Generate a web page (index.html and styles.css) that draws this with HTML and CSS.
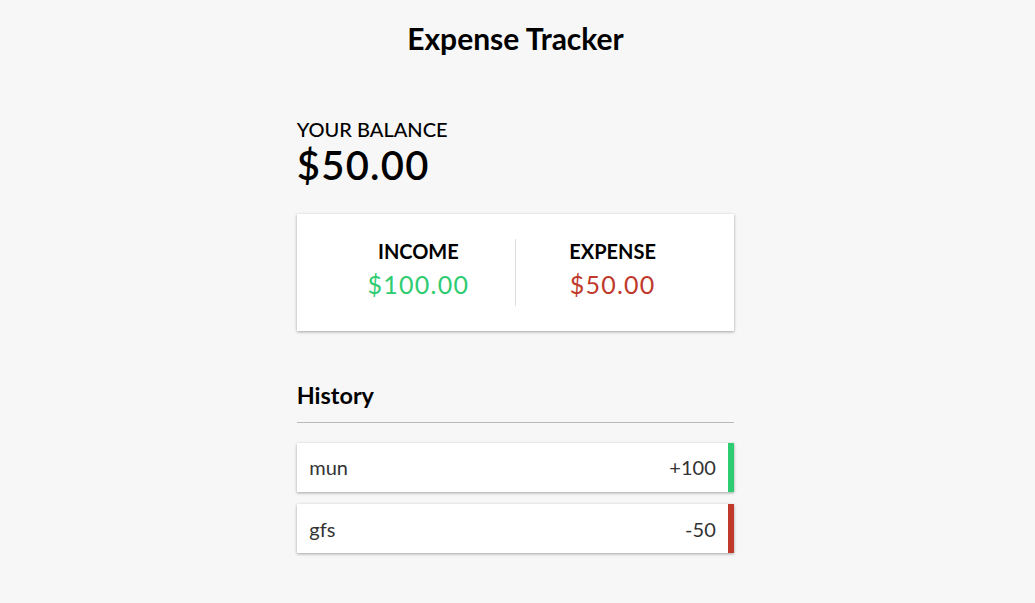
FILE: index.html
```html
<!DOCTYPE html>
<html lang="en">
<head>
<meta charset="UTF-8">
<title>Expense Tracker</title>
<link rel="stylesheet" href="styles.css">
</head>
<body>
  <h2 class="title">Expense Tracker</h2>
  <div class="container">
    <h4 class="balance-label">Your Balance</h4>
    <h1 class="balance">$50.00</h1>
    <div class="inc-exp">
      <div class="inc-exp-col first">
        <h4 class="col-label">Income</h4>
        <p class="money plus">$100.00</p>
      </div>
      <div class="inc-exp-col">
        <h4 class="col-label">Expense</h4>
        <p class="money minus">$50.00</p>
      </div>
    </div>
    <h3 class="section">History</h3>
    <ul class="list">
      <li class="item plus"><span>mun</span><span>+100</span></li>
      <li class="item minus"><span>gfs</span><span>-50</span></li>
    </ul>
  </div>
</body>
</html>
```
FILE: styles.css
```css
* { box-sizing: border-box; }
body {
  margin: 0;
  padding: 20px 4px 0 0;
  background-color: #f7f7f7;
  font-family: Lato, "Open Sans", sans-serif;
  font-size: 20px;
  display: flex;
  flex-direction: column;
  align-items: center;
  color: #000;
}
.title {
  font-size: 30px;
  font-weight: 700;
  margin: 0 0 23px;
  line-height: 1.2;
}
.container {
  width: 437.5px;
  margin: 37.5px auto;
}
.balance-label {
  margin: 0;
  font-size: 20px;
  font-weight: 500;
  text-transform: uppercase;
  line-height: 1.2;
}
.balance {
  margin: 0;
  font-size: 40px;
  font-weight: 600;
  letter-spacing: 1.25px;
  line-height: 1.2;
}
.inc-exp {
  background-color: #fff;
  box-shadow: 0 1.25px 3.75px rgba(0,0,0,0.12), 0 1.25px 2.5px rgba(0,0,0,0.24);
  padding: 25px;
  display: flex;
  justify-content: space-between;
  margin: 25px 0;
}
.inc-exp-col {
  flex: 1;
  text-align: center;
}
.inc-exp-col.first {
  border-right: 1.25px solid #dedede;
}
.col-label {
  margin: 0;
  font-size: 20px;
  font-weight: 700;
  text-transform: uppercase;
  line-height: 1.2;
}
.money {
  font-size: 25px;
  letter-spacing: 1.25px;
  margin: 6.75px 0;
  line-height: 1.2;
}
.money.plus { color: #2ecc71; }
.money.minus { color: #c0392b; }
.section {
  font-size: 23.4px;
  font-weight: 700;
  border-bottom: 1.25px solid #bbb;
  padding-bottom: 12.5px;
  margin: 50px 0 12.5px;
  line-height: 1.2;
}
.list {
  list-style-type: none;
  padding: 0;
  margin: 20px 0 50px;
}
.item {
  background-color: #fff;
  box-shadow: 0 1.25px 3.75px rgba(0,0,0,0.12), 0 1.25px 2.5px rgba(0,0,0,0.24);
  color: #333;
  display: flex;
  justify-content: space-between;
  padding: 12.5px;
  margin: 12.5px 0;
  line-height: 1.2;
}
.item.plus { border-right: 6.25px solid #2ecc71; }
.item.minus { border-right: 6.25px solid #c0392b; }
```
